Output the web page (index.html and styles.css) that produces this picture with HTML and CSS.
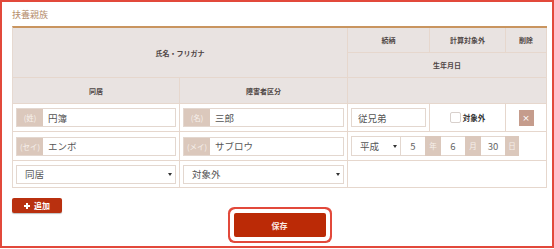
FILE: index.html
```html
<!DOCTYPE html>
<html lang="ja">
<head>
<meta charset="utf-8">
<title>扶養親族</title>
<link rel="stylesheet" href="styles.css">
</head>
<body>
<div class="panel">
  <div class="title">扶養親族</div>
  <table class="fam">
    <colgroup>
      <col class="c1"><col class="c2"><col class="c3"><col class="c4"><col class="c5">
    </colgroup>
    <thead>
      <tr class="ha">
        <th colspan="2" rowspan="2">氏名・フリガナ</th>
        <th>続柄</th>
        <th>計算対象外</th>
        <th>削除</th>
      </tr>
      <tr class="hb">
        <th colspan="3">生年月日</th>
      </tr>
      <tr class="hc">
        <th>同居</th>
        <th>障害者区分</th>
        <th colspan="3"></th>
      </tr>
    </thead>
    <tbody>
      <tr class="r1">
        <td><div class="grp"><span class="pre">(姓)</span><input class="txt" type="text" value="円簿"></div></td>
        <td><div class="grp"><span class="pre">(名)</span><input class="txt" type="text" value="三郎"></div></td>
        <td><input class="solo" type="text" value="従兄弟"></td>
        <td><label class="chk"><input class="box" type="checkbox"><span>対象外</span></label></td>
        <td><button class="del" type="button">×</button></td>
      </tr>
      <tr class="r2">
        <td><div class="grp"><span class="pre">(セイ)</span><input class="txt" type="text" value="エンボ"></div></td>
        <td><div class="grp"><span class="pre">(メイ)</span><input class="txt" type="text" value="サブロウ"></div></td>
        <td colspan="3">
          <div class="date">
            <div class="sel era"><span class="val">平成</span><span class="caret"></span></div>
            <input class="num" type="text" value="5"><span class="unit">年</span>
            <input class="num" type="text" value="6"><span class="unit">月</span>
            <input class="num" type="text" value="30"><span class="unit">日</span>
          </div>
        </td>
      </tr>
      <tr class="r3">
        <td><div class="sel"><span class="val">同居</span><span class="caret"></span></div></td>
        <td><div class="sel"><span class="val">対象外</span><span class="caret"></span></div></td>
        <td colspan="3"></td>
      </tr>
    </tbody>
  </table>
  <div class="actions">
    <button class="add" type="button"><svg class="plus" width="6" height="6" viewBox="0 0 6 6"><path d="M2 0h2v2h2v2h-2v2h-2v-2h-2v-2h2z" fill="#fff"/></svg>追加</button>
  </div>
  <div class="savewrap">
    <button class="save" type="button">保存</button>
  </div>
</div>
</body>
</html>
```

FILE: styles.css
```css
* { box-sizing: border-box; }
html, body { margin: 0; padding: 0; background: #fff; }
body {
  font-family: "Noto Sans CJK JP", "Noto Sans", sans-serif;
  color: #555;
}
.panel {
  width: 554px;
  height: 248px;
  border: 2px solid #e2493b;
  padding: 0 5px 0 10px;
}
.title {
  margin-top: 6px;
  font-size: 9px;
  line-height: 13px;
  color: #b58d6c;
}
.fam {
  margin-top: 5px;
  width: 535px;
  table-layout: fixed;
  border-collapse: separate;
  border-spacing: 0;
  border-top: 2px solid #c9955f;
  border-left: 1px solid #e6d9d0;
}
.c1 { width: 167px; }
.c2 { width: 168px; }
.c3 { width: 82px; }
.c4 { width: 76px; }
.c5 { width: 41px; }
.fam th, .fam td {
  border-right: 1px solid #e6d7cd;
  border-bottom: 1px solid #e6d7cd;
  padding: 0 3px;
  vertical-align: middle;
  font-size: 9.5px;
  line-height: 12px;
}
.fam th {
  background: #e9e3e1;
  font-size: 7px;
  font-weight: bold;
  color: #4f4645;
  text-align: center;
  line-height: 10px;
}
.ha th { height: 25px; }
.hb th { height: 25px; }
.hc th { height: 26px; }
.r1 td { height: 28px; }
.r2 td { height: 29px; }
.r3 td { height: 27px; }

.grp {
  display: flex;
  height: 19px;
  border: 1px solid #e3d7cf;
}
.pre {
  width: 26px;
  flex: none;
  background: #dbc8bc;
  color: #f7f1ec;
  font-size: 7.5px;
  line-height: 17px;
  text-align: center;
}
.txt, .solo, .num {
  font-family: inherit;
  font-size: 9.5px;
  color: #555;
  border: 0;
  outline: none;
  background: #fff;
  padding: 0 5px;
  margin: 0;
}
.txt { flex: 1; min-width: 0; height: 17px; }
.solo {
  display: block;
  width: 75px;
  height: 19px;
  border: 1px solid #e3d7cf;
  padding: 0 6px;
}
.chk {
  display: flex;
  justify-content: center;
  align-items: center;
  gap: 2px;
  font-size: 7.5px;
  font-weight: bold;
  color: #333;
}
.box {
  appearance: none;
  -webkit-appearance: none;
  width: 11px;
  height: 11px;
  margin: 0;
  border: 1px solid #d8d0cc;
  border-radius: 2px;
  background: #fff;
}
.del {
  display: block;
  margin: 0 auto;
  width: 15px;
  height: 16px;
  padding: 0;
  border: 0;
  background: #c59c8c;
  color: #fff;
  font-family: "DejaVu Sans", sans-serif;
  font-size: 9px;
  line-height: 16px;
}

.sel {
  display: flex;
  align-items: center;
  justify-content: space-between;
  height: 19px;
  padding: 0 3px 0 8px;
  border: 1px solid #e3d7cf;
  background: #fff;
}
.val {
  font-size: 9.5px;
  line-height: 12px;
  color: #555;
}
.caret {
  width: 0;
  height: 0;
  border-left: 2px solid transparent;
  border-right: 2px solid transparent;
  border-top: 3px solid #333;
}
.date {
  display: flex;
  height: 20px;
}
.date .sel {
  width: 50px;
  height: 20px;
}
.num {
  width: 24px;
  height: 20px;
  border-top: 1px solid #e3d7cf;
  border-bottom: 1px solid #e3d7cf;
  text-align: center;
  padding: 0;
  color: #666;
}
.unit {
  width: 16px;
  background: #dbc8bc;
  color: #f7f1ec;
  font-size: 7.5px;
  line-height: 20px;
  text-align: center;
}
.unit:last-child { width: 14px; }

.actions {
  margin-top: 10px;
  height: 15px;
}
.add {
  display: inline-flex;
  align-items: center;
  gap: 4px;
  width: 50px;
  height: 15px;
  padding: 0 0 0 12px;
  border: 0;
  border-radius: 2px;
  background: #b9300f;
  box-shadow: 0 1px 1px rgba(0,0,0,0.25);
  color: #fff;
  font-family: inherit;
  font-size: 8px;
  font-weight: bold;
  line-height: 15px;
  vertical-align: top;
}
.plus { flex: none; }
.savewrap {
  display: flex;
  justify-content: center;
}
.save {
  width: 92px;
  height: 24px;
  border: 0;
  border-radius: 2px;
  background: #bb2a06;
  color: #fbe9e4;
  font-family: inherit;
  font-size: 8px;
  font-weight: bold;
  box-shadow: 0 0 0 4px #fff, 0 0 0 6px #e2493b;
}
```
